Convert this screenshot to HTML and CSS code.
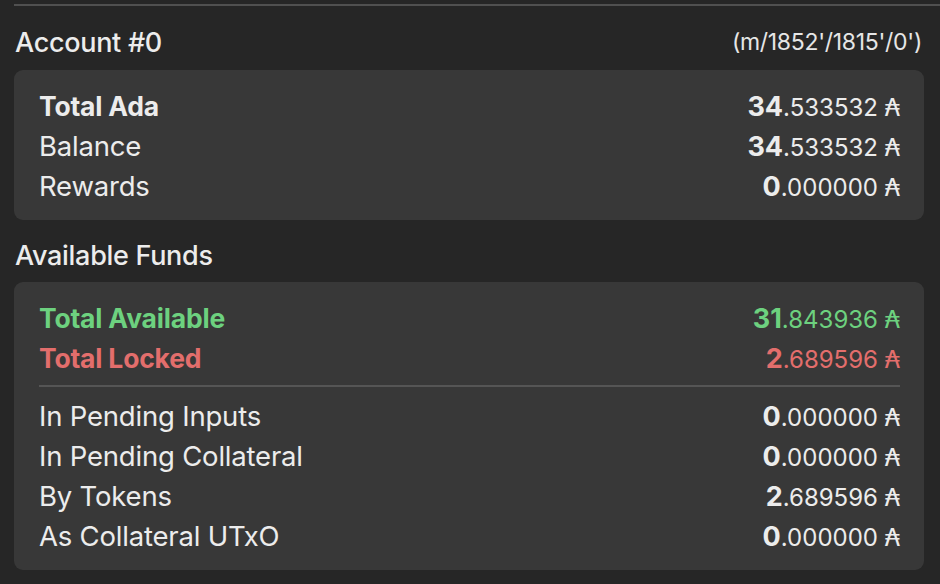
FILE: index.html
```html
<!DOCTYPE html>
<html>
<head>
<meta charset="utf-8">
<link rel="stylesheet" href="styles.css">
</head>
<body>
<div class="page">
  <div class="topline"></div>
  <div class="section-head">
    <span class="title">Account #0</span>
    <span class="path">(m/1852'/1815'/0')</span>
  </div>
  <div class="card card-account">
    <div class="row strong"><span class="label">Total Ada</span><span class="amt"><b>34</b>.533532 <span class="ada">₳</span></span></div>
    <div class="row"><span class="label">Balance</span><span class="amt"><b>34</b>.533532 <span class="ada">₳</span></span></div>
    <div class="row"><span class="label">Rewards</span><span class="amt"><b>0</b>.000000 <span class="ada">₳</span></span></div>
  </div>
  <div class="section-head second">
    <span class="title">Available Funds</span>
  </div>
  <div class="card card-funds">
    <div class="row strong green"><span class="label">Total Available</span><span class="amt"><b>31</b>.843936 <span class="ada">₳</span></span></div>
    <div class="row strong red"><span class="label">Total Locked</span><span class="amt"><b>2</b>.689596 <span class="ada">₳</span></span></div>
    <div class="divider"></div>
    <div class="row"><span class="label">In Pending Inputs</span><span class="amt"><b>0</b>.000000 <span class="ada">₳</span></span></div>
    <div class="row"><span class="label">In Pending Collateral</span><span class="amt"><b>0</b>.000000 <span class="ada">₳</span></span></div>
    <div class="row"><span class="label">By Tokens</span><span class="amt"><b>2</b>.689596 <span class="ada">₳</span></span></div>
    <div class="row"><span class="label">As Collateral UTxO</span><span class="amt"><b>0</b>.000000 <span class="ada">₳</span></span></div>
  </div>
</div>
</body>
</html>
```

FILE: styles.css
```css
html, body {
  margin: 0;
  padding: 0;
  background: #262626;
}
body {
  width: 940px;
  height: 584px;
  overflow: hidden;
  font-family: Inter, "Noto Sans", sans-serif;
  color: #ececec;
}
.page {
  padding: 4px 16px 0 14px;
}
.topline {
  height: 2px;
  background: #505050;
  margin-right: -16px;
}
.section-head {
  display: flex;
  justify-content: space-between;
  align-items: center;
  box-sizing: border-box;
  height: 64px;
  padding: 8px 2px 0 1px;
}
.section-head.second {
  height: 62px;
}
.title {
  font-size: 27px;
  font-weight: 500;
  letter-spacing: -0.3px;
}
.path {
  font-size: 23px;
  color: #e6e6e6;
  letter-spacing: -0.3px;
}
.card {
  background: #383838;
  border-radius: 9px;
  padding: 16px 24px 14px 25px;
}
.row {
  display: flex;
  justify-content: space-between;
  align-items: center;
  height: 40px;
}
.label {
  font-size: 27.5px;
  font-weight: 400;
  letter-spacing: -0.2px;
}
.row.strong .label {
  font-size: 26.5px;
  font-weight: 700;
}
.amt {
  font-size: 24px;
  font-weight: 400;
}
.amt b {
  font-size: 27px;
  font-weight: 700;
}
.ada {
  font-family: "DejaVu Sans", sans-serif;
  font-size: 24px;
}
.green { color: #6dd17f; }
.red { color: #e36e6c; }
.divider {
  height: 2px;
  background: #555555;
  margin: 7px 0 9px;
}
```
